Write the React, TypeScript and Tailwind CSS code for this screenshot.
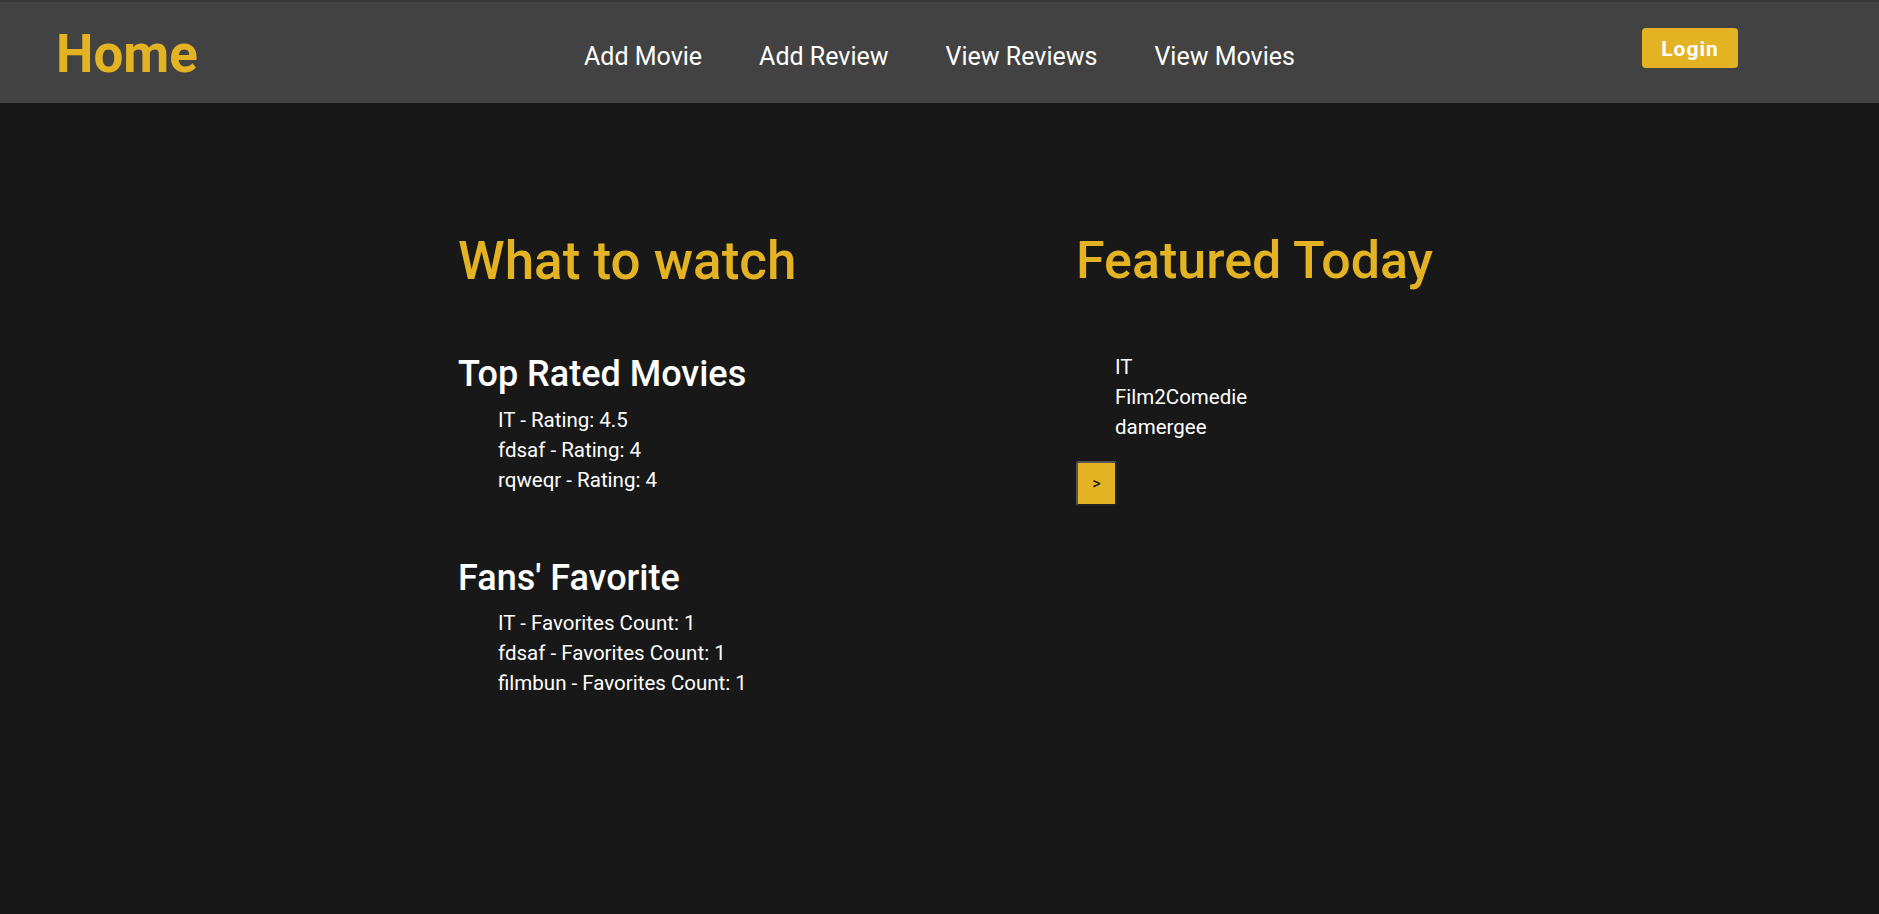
import React from 'react';

const navLinks = ['Add Movie', 'Add Review', 'View Reviews', 'View Movies'];

const topRated = [
    { title: 'IT', rating: '4.5' },
    { title: 'fdsaf', rating: '4' },
    { title: 'rqweqr', rating: '4' },
];

const fansFavorite = [
    { title: 'IT', count: 1 },
    { title: 'fdsaf', count: 1 },
    { title: 'filmbun', count: 1 },
];

const featured = ['IT', 'Film2Comedie', 'damergee'];

const Navbar: React.FC = () => (
    <header className="h-[103px] bg-[#424242] border-t-2 border-[#383838] grid grid-cols-[1fr_auto_1fr] items-start">
        <a href="#" className="justify-self-start ml-[56px] mt-[20px] text-[53px] leading-[64px] font-bold text-[#e3b324]">
            Home
        </a>
        <nav className="mt-[39px] flex gap-[57px]">
            {navLinks.map(link => (
                <a key={link} href="#" className="text-[25px] leading-[32px] text-white">
                    {link}
                </a>
            ))}
        </nav>
        <button className="justify-self-end mr-[141px] mt-[26px] h-[40px] w-[96px] pt-[3px] rounded-[4px] bg-[#e3b324] text-white text-[21px] leading-[37px] font-bold tracking-[1px]">
            Login
        </button>
    </header>
);

const MovieList: React.FC<{ items: string[]; className?: string }> = ({ items, className }) => (
    <ul className={className}>
        {items.map(item => (
            <li key={item} className="text-[20.5px] leading-[30px] text-white">{item}</li>
        ))}
    </ul>
);

const App: React.FC = () => {
    return (
        <div
            className="min-h-screen bg-[#181818]"
            style={{ fontFamily: 'Roboto, "Noto Sans", sans-serif' }}
        >
            <Navbar />
            <main className="pl-[458px] pt-[126px] flex">
                <section className="w-[618px]">
                    <h2 className="text-[53px] leading-[64px] font-medium text-[#e3b324]">What to watch</h2>
                    <h3 className="mt-[59px] text-[36px] leading-[44px] font-medium text-white">Top Rated Movies</h3>
                    <MovieList className="mt-[9px] pl-[40px]" items={topRated.map(m => `${m.title} - Rating: ${m.rating}`)} />
                    <h3 className="mt-[61px] text-[36px] leading-[44px] font-medium text-white">Fans' Favorite</h3>
                    <MovieList className="mt-[8px] pl-[40px]" items={fansFavorite.map(m => `${m.title} - Favorites Count: ${m.count}`)} />
                </section>
                <section>
                    <h2 className="text-[52px] leading-[64px] font-medium text-[#e3b324]">Featured Today</h2>
                    <MovieList className="mt-[59px] pl-[39px]" items={featured} />
                    <button className="mt-[19px] w-[41px] h-[45px] rounded-[3px] border-2 border-[#555555] border-r-[#222222] border-b-[#222222] bg-[#e3b324] text-black text-[16px] leading-none">
                        &gt;
                    </button>
                </section>
            </main>
        </div>
    );
};

export default App;
